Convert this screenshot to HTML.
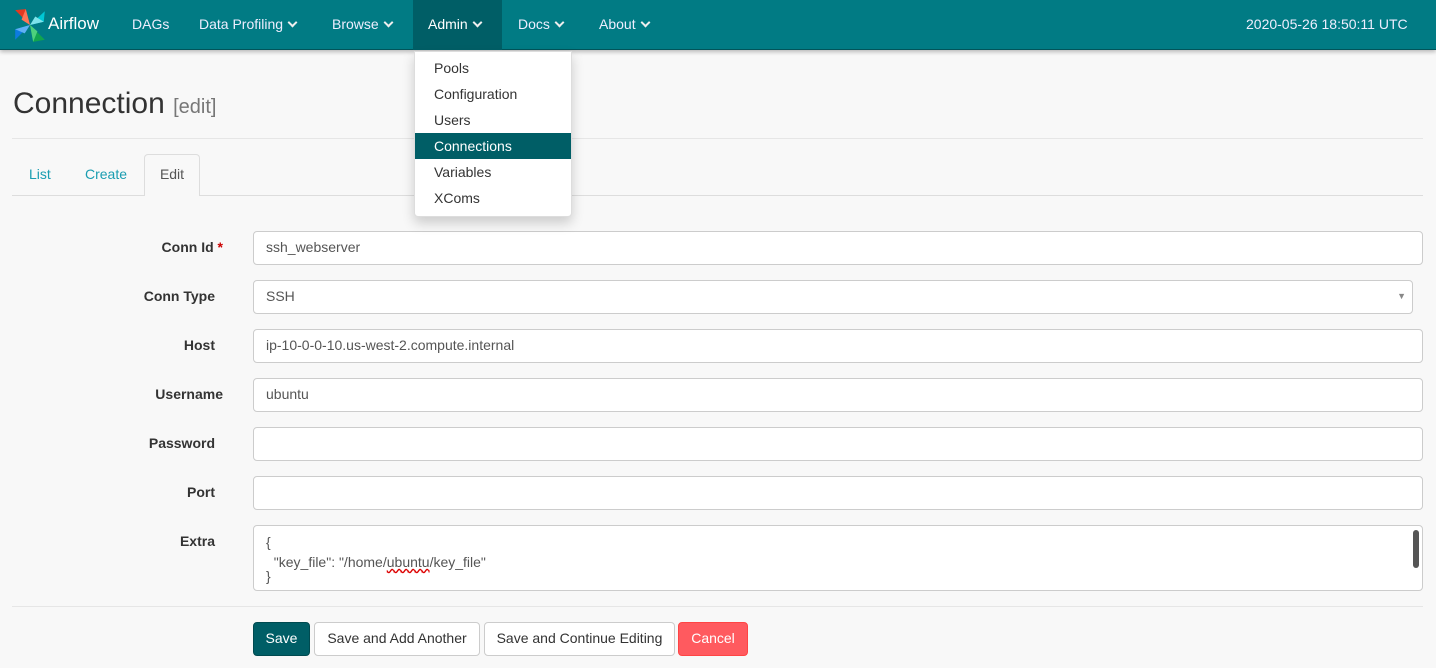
<!DOCTYPE html>
<html><head><meta charset="utf-8"><style>
*{box-sizing:border-box}
body{margin:0;background:#f8f8f8;font-family:"Liberation Sans",sans-serif;font-size:14px;color:#333;width:1436px;height:668px;overflow:hidden;position:relative}
.nav{position:absolute;left:0;top:0;width:1436px;height:50px;background:#017b84;border-bottom:1px solid #01545a;box-shadow:0 2px 4px rgba(0,0,0,.25);color:#e8f4f4}
.nav span{position:absolute;top:16px;font-size:14px;color:#eef}
.nav .chev{display:inline-block;width:7px;height:7px;border-right:2px solid #eee;border-bottom:2px solid #eee;transform:rotate(45deg);margin-left:6px;position:relative;top:-3px}
.admin{position:absolute;left:413px;top:0;width:89px;height:50px;background:#005e66}
.dd{position:absolute;left:414px;top:51px;width:158px;height:166px;background:#fff;border:1px solid #ddd;border-radius:0 0 4px 4px;box-shadow:0 6px 12px rgba(0,0,0,.18)}
.dd div{height:26px;line-height:26px;padding-left:19px;color:#333}
.dd .act{background:#005e66;color:#fff}
h1{position:absolute;left:13px;top:87px;margin:0;font-size:30px;font-weight:normal;color:#333}
h1 small{font-size:20px;color:#777}
.hr{position:absolute;left:12px;width:1411px;height:1px;background:#e6e6e6}
.tab{position:absolute;top:166px;color:#1a9db1}
.etab{position:absolute;left:144px;top:154px;width:56px;height:42px;border:1px solid #ddd;border-bottom:none;border-radius:4px 4px 0 0;background:#f8f8f8;color:#555;text-align:center;line-height:38px}
.lbl{position:absolute;width:202px;text-align:right;font-weight:bold;left:13px}
.inp{position:absolute;left:253px;width:1170px;height:34px;background:#fff;border:1px solid #ccc;border-radius:4px;padding-left:12px;line-height:31px;color:#555}
.btn{position:absolute;top:622px;height:34px;border:1px solid #ccc;border-radius:4px;background:#fff;line-height:31px;text-align:center;color:#333}
</style></head><body>
<div class="nav">
<svg style="position:absolute;left:12px;top:7px" width="36" height="37" viewBox="0 0 34 35">
<path d="M17 17 L3 3 L13 2 Z" fill="#e43921"/>
<path d="M17 17 L31 4 L30 14 Z" fill="#00c7d4"/>
<path d="M17 17 L31 31 L20 33 Z" fill="#11a44f"/>
<path d="M17 17 L3 31 L3 21 Z" fill="#0d7be0"/>
<path d="M17 17 L13 2 L9 12 Z" fill="#ff7557"/>
<path d="M17 17 L30 14 L22 9 Z" fill="#7ee3ea"/>
<path d="M17 17 L20 33 L24 23 Z" fill="#4cd07d"/>
<path d="M17 17 L3 21 L12 25 Z" fill="#5fb0f5"/>
</svg>
<span style="left:48px;font-size:17px;top:14px;color:#fff">Airflow</span>
<span style="left:132px">DAGs</span>
<span style="left:199px">Data Profiling<i class="chev"></i></span>
<span style="left:332px">Browse<i class="chev"></i></span>
<div class="admin"></div>
<span style="left:428px;color:#fff">Admin<i class="chev"></i></span>
<span style="left:518px">Docs<i class="chev"></i></span>
<span style="left:599px">About<i class="chev"></i></span>
<span style="left:1246px">2020-05-26 18:50:11 UTC</span>
</div>
<h1>Connection <small>[edit]</small></h1>
<div class="hr" style="top:138px"></div>
<div class="hr" style="top:195px;background:#ddd"></div>
<span class="tab" style="left:29px">List</span>
<span class="tab" style="left:85px">Create</span>
<div class="etab">Edit</div>
<div class="lbl" style="top:239px;width:210px">Conn Id <span style="color:#c00">*</span></div>
<div class="inp" style="top:231px">ssh_webserver</div>
<div class="lbl" style="top:288px">Conn Type</div>
<div class="inp" style="top:280px;width:1160px">SSH<span style="position:absolute;right:6px;top:0;font-size:9px;color:#888">▼</span></div>
<div class="lbl" style="top:337px">Host</div>
<div class="inp" style="top:329px">ip-10-0-0-10.us-west-2.compute.internal</div>
<div class="lbl" style="top:386px;width:210px">Username</div>
<div class="inp" style="top:378px">ubuntu</div>
<div class="lbl" style="top:435px">Password</div>
<div class="inp" style="top:427px"></div>
<div class="lbl" style="top:484px">Port</div>
<div class="inp" style="top:476px"></div>
<div class="lbl" style="top:533px">Extra</div>
<div class="inp" style="top:525px;height:66px;line-height:20px;padding-top:6px;overflow:hidden">{<br>&nbsp;&nbsp;"key_file": "/home/<span style="text-decoration:underline wavy #d00">ubuntu</span>/key_file"<br><span style="position:relative;top:-6px">}</span><div style="position:absolute;right:3px;top:4px;width:6px;height:38px;background:#555;border-radius:3px"></div></div>
<div class="hr" style="top:606px"></div>
<div class="btn" style="left:253px;width:57px;background:#005e66;border-color:#004a50;color:#fff">Save</div>
<div class="btn" style="left:314px;width:166px">Save and Add Another</div>
<div class="btn" style="left:484px;width:191px">Save and Continue Editing</div>
<div class="btn" style="left:678px;width:70px;background:#ff5a5f;border-color:#f44;color:#fff">Cancel</div>
<div class="dd"><div style="margin-top:3px">Pools</div><div>Configuration</div><div>Users</div><div class="act">Connections</div><div>Variables</div><div>XComs</div></div>
</body></html>
